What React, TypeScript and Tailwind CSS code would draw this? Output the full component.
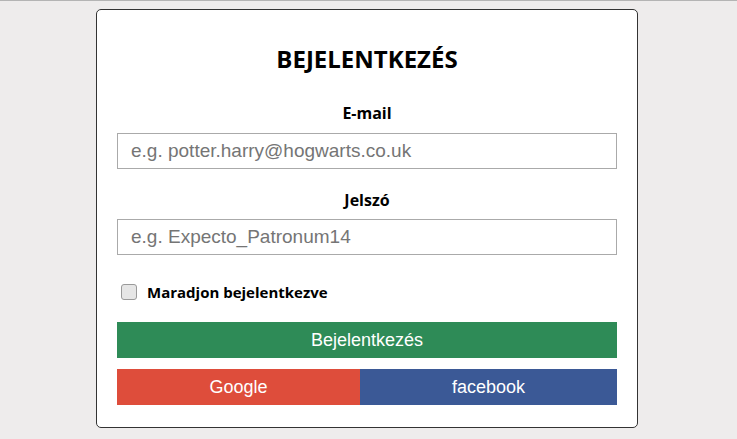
import React from "react";

export default function App() {
  return (
    <div className="min-h-[439px] w-full bg-[#eeecec] border-t border-[#b4b4b4] pt-2" style={{ fontFamily: '"Open Sans", sans-serif' }}>
      <div className="ml-[96px] w-[542px] h-[419px] bg-white border border-[#333] rounded-[5px] px-5 flex flex-col">
        <h1 className="mt-[35px] h-[28px] leading-[28px] text-center text-[24px] font-bold text-black">BEJELENTKEZÉS</h1>
        <label className="mt-[30px] h-[20px] leading-[20px] text-center text-[16px] font-bold text-black">E-mail</label>
        <input
          className="mt-[10px] h-[36px] w-full border border-[#aaa] px-[13px] text-[19px] outline-none placeholder:text-[#757575]"
          style={{ fontFamily: '"Liberation Sans", Arial, sans-serif' }}
          placeholder="e.g. potter.harry@hogwarts.co.uk"
        />
        <label className="mt-[21px] h-[20px] leading-[20px] text-center text-[16px] font-bold text-black">Jelszó</label>
        <input
          className="mt-[9px] h-[36px] w-full border border-[#aaa] px-[13px] text-[19px] outline-none placeholder:text-[#757575]"
          style={{ fontFamily: '"Liberation Sans", Arial, sans-serif' }}
          placeholder="e.g. Expecto_Patronum14"
        />
        <div className="mt-[28px] flex items-center h-[18px]">
          <span className="ml-[4px] w-[16px] h-[16px] rounded-[3px] border border-[#9a9a9a] bg-[#e6e6e6]" />
          <span className="ml-[10px] text-[15px] font-bold text-black">Maradjon bejelentkezve</span>
        </div>
        <button
          className="mt-[21px] h-[36px] w-full bg-[#2e8b57] text-white text-[18px]"
          style={{ fontFamily: '"Liberation Sans", Arial, sans-serif' }}
        >
          Bejelentkezés
        </button>
        <div className="mt-[11px] flex h-[36px]" style={{ fontFamily: '"Liberation Sans", Arial, sans-serif' }}>
          <button className="w-[243px] h-full bg-[#de4d3b] text-white text-[18px]">Google</button>
          <button className="flex-1 h-full bg-[#3b5996] text-white text-[18px]">facebook</button>
        </div>
      </div>
    </div>
  );
}
